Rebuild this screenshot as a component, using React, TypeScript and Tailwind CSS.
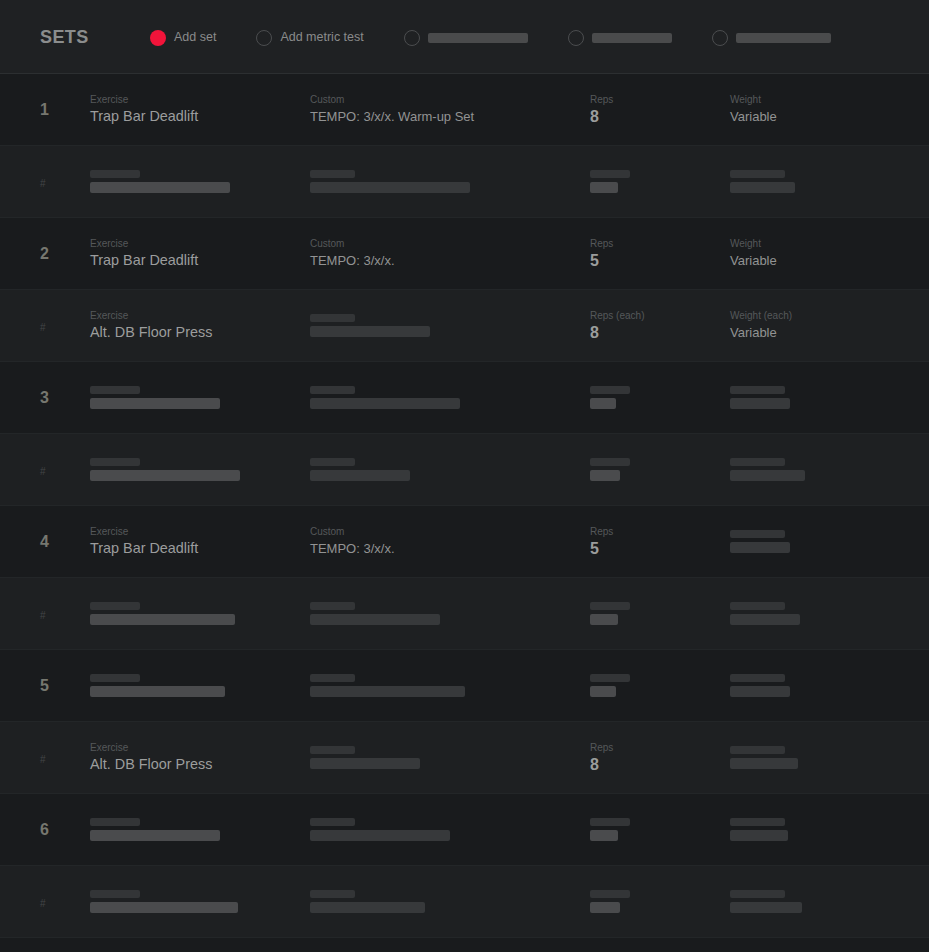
import React from 'react'

type Cell = { label?: string; value?: string; lw?: number; vw?: number; light?: boolean }

type Row = {
  num?: number
  exercise: Cell
  custom: Cell
  reps: Cell
  weight: Cell
}

const rows: Row[] = [
  {
    num: 1,
    exercise: { label: 'Exercise', value: 'Trap Bar Deadlift' },
    custom: { label: 'Custom', value: 'TEMPO: 3/x/x. Warm-up Set' },
    reps: { label: 'Reps', value: '8' },
    weight: { label: 'Weight', value: 'Variable' },
  },
  {
    exercise: { lw: 50, vw: 140, light: true },
    custom: { lw: 45, vw: 160 },
    reps: { lw: 40, vw: 28, light: true },
    weight: { lw: 55, vw: 65 },
  },
  {
    num: 2,
    exercise: { label: 'Exercise', value: 'Trap Bar Deadlift' },
    custom: { label: 'Custom', value: 'TEMPO: 3/x/x.' },
    reps: { label: 'Reps', value: '5' },
    weight: { label: 'Weight', value: 'Variable' },
  },
  {
    exercise: { label: 'Exercise', value: 'Alt. DB Floor Press' },
    custom: { lw: 45, vw: 120 },
    reps: { label: 'Reps (each)', value: '8' },
    weight: { label: 'Weight (each)', value: 'Variable' },
  },
  {
    num: 3,
    exercise: { lw: 50, vw: 130, light: true },
    custom: { lw: 45, vw: 150 },
    reps: { lw: 40, vw: 26, light: true },
    weight: { lw: 55, vw: 60 },
  },
  {
    exercise: { lw: 50, vw: 150, light: true },
    custom: { lw: 45, vw: 100 },
    reps: { lw: 40, vw: 30, light: true },
    weight: { lw: 55, vw: 75 },
  },
  {
    num: 4,
    exercise: { label: 'Exercise', value: 'Trap Bar Deadlift' },
    custom: { label: 'Custom', value: 'TEMPO: 3/x/x.' },
    reps: { label: 'Reps', value: '5' },
    weight: { lw: 55, vw: 60 },
  },
  {
    exercise: { lw: 50, vw: 145, light: true },
    custom: { lw: 45, vw: 130 },
    reps: { lw: 40, vw: 28, light: true },
    weight: { lw: 55, vw: 70 },
  },
  {
    num: 5,
    exercise: { lw: 50, vw: 135, light: true },
    custom: { lw: 45, vw: 155 },
    reps: { lw: 40, vw: 26, light: true },
    weight: { lw: 55, vw: 60 },
  },
  {
    exercise: { label: 'Exercise', value: 'Alt. DB Floor Press' },
    custom: { lw: 45, vw: 110 },
    reps: { label: 'Reps', value: '8' },
    weight: { lw: 55, vw: 68 },
  },
  {
    num: 6,
    exercise: { lw: 50, vw: 130, light: true },
    custom: { lw: 45, vw: 140 },
    reps: { lw: 40, vw: 28, light: true },
    weight: { lw: 55, vw: 58 },
  },
  {
    exercise: { lw: 50, vw: 148, light: true },
    custom: { lw: 45, vw: 115 },
    reps: { lw: 40, vw: 30, light: true },
    weight: { lw: 55, vw: 72 },
  },
]

const Value = ({ cell, kind }: { cell: Cell; kind: 'name' | 'small' | 'big' }) => {
  if (cell.value) {
    return (
      <div className="flex flex-col">
        <span className="text-[10px] leading-[13px] text-[#55585a]">{cell.label}</span>
        {kind === 'big' && (
          <span className="text-[16px] leading-[21px] font-bold text-[#9b9d9c]">{cell.value}</span>
        )}
        {kind === 'name' && (
          <span className="text-[14.4px] leading-[21px] text-[#9c9d9d]">{cell.value}</span>
        )}
        {kind === 'small' && (
          <span className="text-[13px] leading-[21px] text-[#929393]">{cell.value}</span>
        )}
      </div>
    )
  }
  return (
    <div className="flex flex-col gap-[4px]">
      <div className="h-[8px] rounded-[2px] bg-[#333537]" style={{ width: cell.lw }} />
      <div
        className={`h-[11px] rounded-[2px] ${cell.light ? 'bg-[#4a4b4d]' : 'bg-[#37393b]'}`}
        style={{ width: cell.vw }}
      />
    </div>
  )
}

const Radio = ({ active, label, bar }: { active?: boolean; label?: string; bar?: number }) => (
  <div className="flex items-center gap-2">
    {active ? (
      <span className="w-4 h-4 rounded-full bg-[#f2143a]" />
    ) : (
      <span className="w-4 h-4 rounded-full border border-[#4b4d4f]" />
    )}
    {label ? (
      <span className="text-[12.5px] text-[#8a8b8b]">{label}</span>
    ) : (
      <span className="h-[10px] rounded-[2px] bg-[#4a4b4c]" style={{ width: bar }} />
    )}
  </div>
)

export default function App() {
  return (
    <div
      className="min-h-[952px] w-full bg-[#191b1d]"
      style={{ fontFamily: '"Liberation Sans", Arial, sans-serif' }}
    >
      <div className="h-[74px] flex items-center bg-[#1f2123] border-b border-[#2c2f31] pl-10 pt-[2px]">
        <span className="text-[18px] font-bold tracking-[0.4px] text-[#8b8d8d] w-[110px]">SETS</span>
        <div className="flex items-center gap-10">
          <Radio active label="Add set" />
          <Radio label="Add metric test" />
          <Radio bar={100} />
          <Radio bar={80} />
          <Radio bar={95} />
        </div>
      </div>
      {rows.map((row, i) => (
        <div
          key={i}
          className={`h-[72px] flex items-center border-b border-[#232628] ${
            row.num ? 'bg-[#191b1d]' : 'bg-[#1e2022]'
          }`}
        >
          <div className="w-[90px] pl-10">
            {row.num ? (
              <span className="text-[16px] font-bold text-[#76776f]">{row.num}</span>
            ) : (
              <span className="text-[10px] text-[#434547]">#</span>
            )}
          </div>
          <div className="w-[220px]">
            <Value cell={row.exercise} kind="name" />
          </div>
          <div className="w-[280px]">
            <Value cell={row.custom} kind="small" />
          </div>
          <div className="w-[140px]">
            <Value cell={row.reps} kind="big" />
          </div>
          <div className="flex-1">
            <Value cell={row.weight} kind="small" />
          </div>
        </div>
      ))}
    </div>
  )
}
